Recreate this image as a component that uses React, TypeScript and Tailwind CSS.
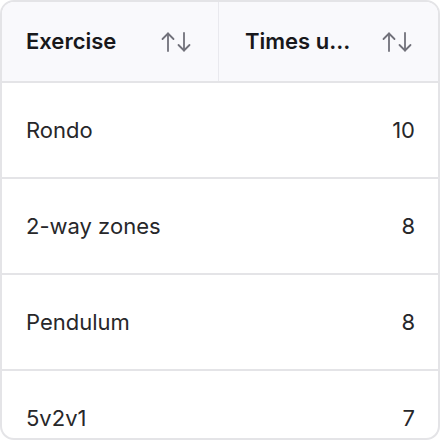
import React from "react";

const ROWS = [
  { name: "Rondo", count: 10 },
  { name: "2-way zones", count: 8 },
  { name: "Pendulum", count: 8 },
  { name: "5v2v1", count: 7 },
];

const SortIcon: React.FC = () => (
  <div className="w-[30px] h-[20px] shrink-0">
    <svg width="30" height="20" viewBox="0 0 30 20" fill="none" stroke="#71717a" strokeWidth="1.8" strokeLinecap="round" strokeLinejoin="round">
      <path d="M7 1.5V19" />
      <path d="M1.5 7L7 1.5L12.5 7" />
      <path d="M23 1V18.5" />
      <path d="M17.5 13L23 18.5L28.5 13" />
    </svg>
  </div>
);

export default function App() {
  return (
    <div className="w-[440px] h-[440px] bg-white" style={{ fontFamily: "Inter, 'Noto Sans', sans-serif" }}>
      <div className="w-full h-full border-2 border-[#e4e4e7] rounded-[14px] overflow-hidden">
        <div className="grid grid-cols-[217px_1fr] h-[81px] bg-[#f9f9fc] border-b-2 border-[#e4e4e7]">
          <div className="flex items-center justify-between pl-6 pr-[27px] border-r border-[#e9e9ee]">
            <span className="w-[112px] truncate text-[22px] font-semibold text-[#18181b]">Exercise</span>
            <SortIcon />
          </div>
          <div className="flex items-center justify-between pl-[26px] pr-[26px]">
            <span className="w-[112px] truncate text-[22px] font-semibold text-[#18181b]">Times used</span>
            <SortIcon />
          </div>
        </div>
        {ROWS.map((r) => (
          <div key={r.name} className="flex items-center justify-between h-[96px] border-b-2 border-[#e4e4e7] pl-6 pr-[23px] text-[22px] text-[#27272a]">
            <span>{r.name}</span>
            <span>{r.count}</span>
          </div>
        ))}
      </div>
    </div>
  );
}
